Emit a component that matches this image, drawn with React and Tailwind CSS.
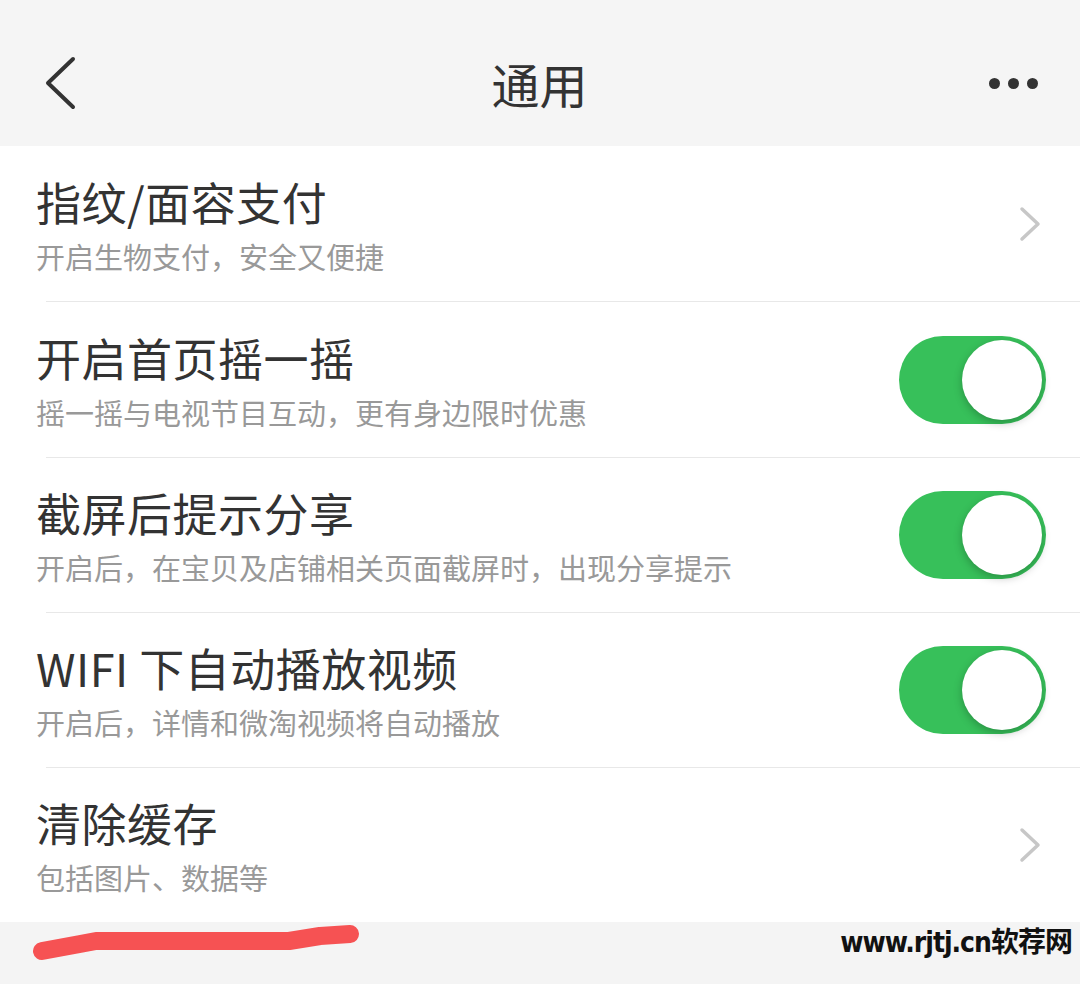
import { useState } from 'react'

const rows = [
  { title: '指纹/面容支付', sub: '开启生物支付，安全又便捷', type: 'link', h: 'h-[155px]' },
  { title: '开启首页摇一摇', sub: '摇一摇与电视节目互动，更有身边限时优惠', type: 'toggle', h: 'h-[155px]' },
  { title: '截屏后提示分享', sub: '开启后，在宝贝及店铺相关页面截屏时，出现分享提示', type: 'toggle', h: 'h-[154px]' },
  { title: 'WIFI 下自动播放视频', sub: '开启后，详情和微淘视频将自动播放', type: 'toggle', h: 'h-[154px]' },
  { title: '清除缓存', sub: '包括图片、数据等', type: 'link', h: 'h-[154px]' },
]

function Toggle({ on, onClick }) {
  return (
    <button
      onClick={onClick}
      className={`w-[147px] h-[88px] rounded-full p-[4px] flex items-center transition-colors ${on ? 'bg-[#37c05a] justify-end' : 'bg-[#e5e5e5] justify-start'}`}
    >
      <span className="w-[80px] h-[80px] rounded-full bg-white shadow-[0_3px_8px_rgba(0,0,0,0.25)]"></span>
    </button>
  )
}

export default function App() {
  const [toggles, setToggles] = useState({ 1: true, 2: true, 3: true })

  return (
    <div className="w-[1080px] h-[984px] bg-[#f4f4f4] flex flex-col font-['Noto_Sans_CJK_SC',sans-serif] overflow-hidden">
      {/* header */}
      <div className="h-[146px] bg-[#f5f5f5] flex items-center justify-between px-[40px] pt-[20px] shrink-0">
        <svg width="36" height="54" viewBox="0 0 36 54" className="ml-[2px]">
          <path d="M31 3 L6 27 L31 51" fill="none" stroke="#333" strokeWidth="4" strokeLinecap="round" strokeLinejoin="round" />
        </svg>
        <div className="text-[48px] text-[#333] leading-none pl-[12px]">通用</div>
        <div className="flex gap-[8px] items-center mr-[2px]">
          <span className="w-[11px] h-[11px] rounded-full bg-[#333]"></span>
          <span className="w-[11px] h-[11px] rounded-full bg-[#333]"></span>
          <span className="w-[11px] h-[11px] rounded-full bg-[#333]"></span>
        </div>
      </div>

      {/* settings list */}
      <div className="bg-white">
        {rows.map((row, i) => (
          <div key={i}>
            {i > 0 && <div className="ml-[46px] h-px bg-[#e8e8e8]"></div>}
            <div className={`flex items-center justify-between pl-[36px] pr-[35px] ${row.h}`}>
              <div className="flex flex-col">
                <div className="text-[45px] leading-[52px] text-[#333] tracking-[0.5px]">{row.title}</div>
                <div className="text-[29px] leading-[32px] text-[#999] mt-[12px]">{row.sub}</div>
              </div>
              {row.type === 'link' ? (
                <svg width="24" height="36" viewBox="0 0 24 36" className="mr-[3px]">
                  <path d="M4 3 L20 18 L4 33" fill="none" stroke="#c7c7c7" strokeWidth="3.5" strokeLinecap="round" strokeLinejoin="round" />
                </svg>
              ) : (
                <div className="-mr-[1px]">
                  <Toggle on={toggles[i]} onClick={() => setToggles({ ...toggles, [i]: !toggles[i] })} />
                </div>
              )}
            </div>
          </div>
        ))}
      </div>

      {/* footer strip */}
      <div className="flex-1 flex items-start justify-between pr-[8px]">
        <svg width="340" height="44" viewBox="0 0 340 44" className="ml-[30px] mt-[1px]">
          <path d="M12 28 L50 21 L66 18 L259 18 L290 13 L320 11" fill="none" stroke="#f65253" strokeWidth="18" strokeLinecap="round" strokeLinejoin="round" />
        </svg>
        <div className="mt-[0px] text-[28px] font-bold text-[#111] font-['Liberation_Sans_Narrow','DejaVu_Sans_Condensed','Noto_Sans_CJK_SC',sans-serif] tracking-[-1px]">
          www.rjtj.cn软荐网
        </div>
      </div>
    </div>
  )
}
